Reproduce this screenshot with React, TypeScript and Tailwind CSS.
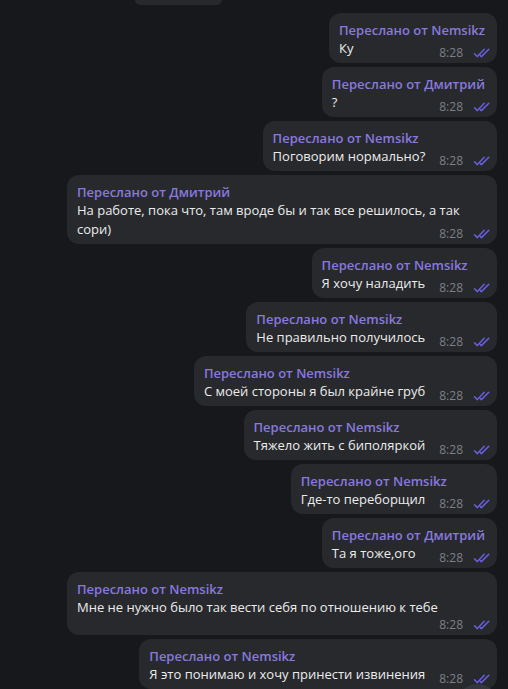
type Message = {
  from: string;
  text: string;
  timeBelow?: boolean;
};

const MESSAGES: Message[] = [
  { from: "Nemsikz", text: "Ку" },
  { from: "Дмитрий", text: "?" },
  { from: "Nemsikz", text: "Поговорим нормально?" },
  { from: "Дмитрий", text: "На работе, пока что, там вроде бы и так все решилось, а так сори)" },
  { from: "Nemsikz", text: "Я хочу наладить" },
  { from: "Nemsikz", text: "Не правильно получилось" },
  { from: "Nemsikz", text: "С моей стороны я был крайне груб" },
  { from: "Nemsikz", text: "Тяжело жить с биполяркой" },
  { from: "Nemsikz", text: "Где-то переборщил" },
  { from: "Дмитрий", text: "Та я тоже,ого" },
  { from: "Nemsikz", text: "Мне не нужно было так вести себя по отношению к тебе", timeBelow: true },
  { from: "Nemsikz", text: "Я это понимаю и хочу принести извинения" },
];

function DoubleCheck() {
  return (
    <svg aria-hidden="true" className="h-[10px] w-[18px]" fill="none" viewBox="0 0 18 10">
      <path
        d="M1.5 5.8 4.4 8.6 11.2 1.2M7.4 7.6l1 1L15.8 1.2"
        stroke="#6a5ee0"
        strokeLinecap="round"
        strokeLinejoin="round"
        strokeWidth="1.5"
      />
    </svg>
  );
}

function TimeStamp() {
  return (
    <>
      <span>8:28</span>
      <DoubleCheck />
    </>
  );
}

function Bubble({ message }: { message: Message }) {
  return (
    <div
      className={
        message.timeBelow
          ? "w-[430px] rounded-[12px] bg-[#27292d] pb-[5px] pl-[10px] pr-[6px] pt-[8px]"
          : "max-w-[430px] rounded-[12px] bg-[#27292d] pb-[5px] pl-[10px] pr-[6px] pt-[8px]"
      }
    >
      <div className="pr-[6px] text-[13px] font-semibold leading-[18px] text-[#8779dd]">
        Переслано от {message.from}
      </div>
      {message.timeBelow ? (
        <>
          <p className="text-[13px] leading-[19px] text-[#ececec]">{message.text}</p>
          <div className="-mb-[2px] mt-[1px] flex h-[14px] items-center justify-end gap-[10px] text-[12px] leading-[14px] text-[#7d8085]">
            <TimeStamp />
          </div>
        </>
      ) : (
        <p className="flow-root text-[13px] leading-[19px] text-[#ececec]">
          {message.text}
          <span className="float-right -mb-[7px] ml-[14px] mt-[7px] flex h-[14px] items-center gap-[10px] text-[12px] leading-[14px] text-[#7d8085]">
            <TimeStamp />
          </span>
        </p>
      )}
    </div>
  );
}

export default function App() {
  return (
    <div
      className="relative h-[689px] w-[508px] overflow-hidden bg-[#17181c]"
      style={{ fontFamily: '"Open Sans", "Noto Sans", sans-serif' }}
    >
      <div className="flex flex-col items-end gap-[4px] pr-[11px]">
        <div className="mb-[4px] ml-[135px] h-[5px] w-[87px] self-start rounded-b-[12px] bg-[#27292d]" />
        {MESSAGES.map((message, index) => (
          <Bubble key={index} message={message} />
        ))}
      </div>
      <div className="absolute left-[456px] top-[684px] h-[43px] w-[43px] rounded-full bg-[#35373c]" />
    </div>
  );
}
